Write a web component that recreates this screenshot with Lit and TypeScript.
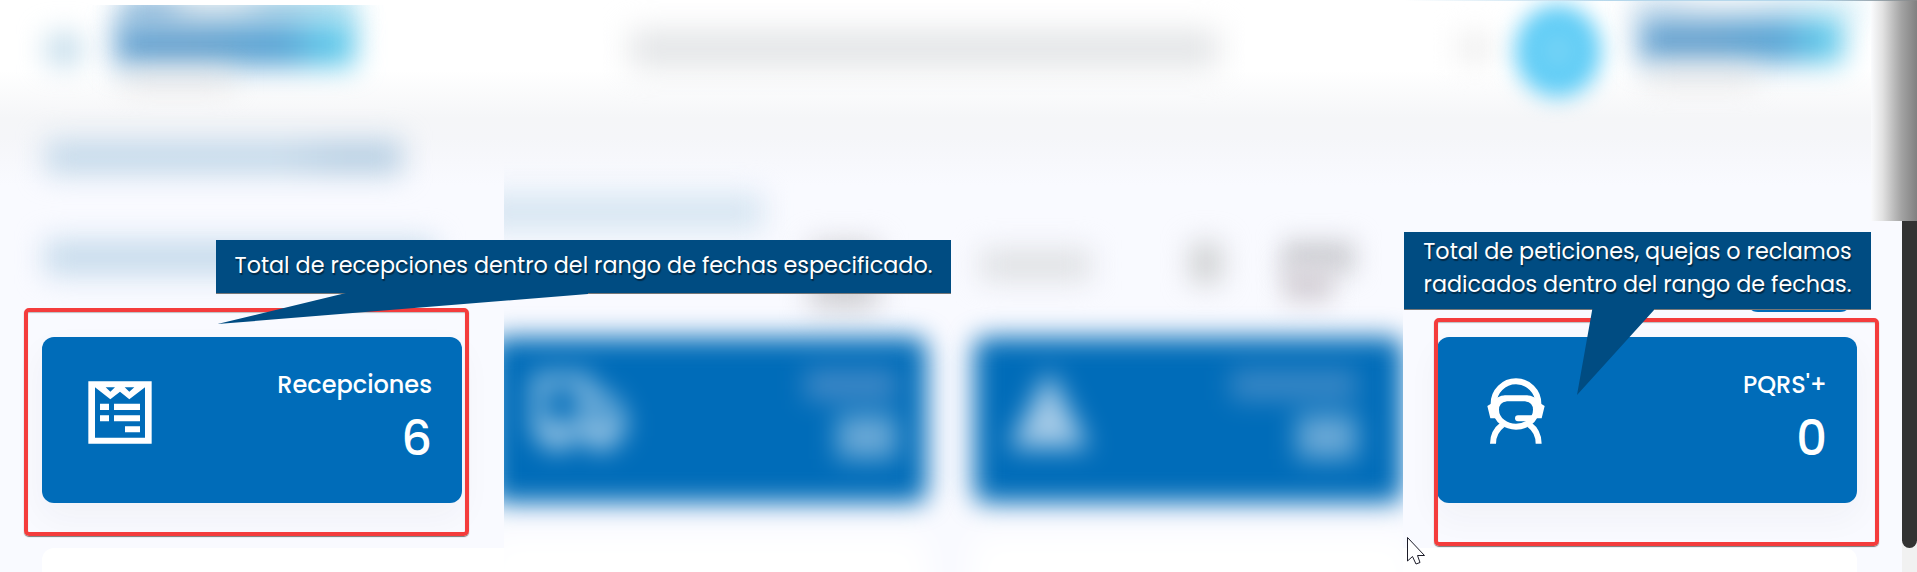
import { LitElement, html, css, svg } from "lit";
import { customElement, property } from "lit/decorators.js";

const receipt = svg`<svg width="64" height="63" viewBox="54 62 192 189" fill="#fff">
  <path fill-rule="evenodd" d="M55 63H245V250H55ZM75 81V232H225V81L178 117L150 94L121 117ZM107 81L121 94L135 81ZM164 81L178 94L193 81Z"/>
  <path d="M90 130h27v19h-27zM132 130h78v19h-78zM90 165h27v18h-27zM132 165h78v18h-78zM165 198h45v18h-45z"/>
</svg>`;

const support = svg`<svg width="58" height="66" viewBox="79 53 174 198" fill="none" stroke="#fff" stroke-width="18">
  <path d="M99 140V130A67 67 0 0 1 233 130V140"/>
  <path d="M100 136Q112 114 136 114H196Q220 114 232 136"/>
  <path d="M136 114Q106 120 106 148C106 180 137 199 166 199C195 199 226 180 226 148Q226 120 196 114"/>
  <path d="M172 174H216" stroke-linecap="round"/>
  <path d="M97 250C97 228 107 207 126 193M234 250C234 228 225 207 206 193"/>
  <path d="M80 137L91 130H106V174H89ZM252 137L241 130H226V174H243Z" fill="#fff" stroke="none"/>
</svg>`;

const truck = svg`<svg width="92" height="84" viewBox="0 0 92 84" fill="none" stroke="#a9cfea" stroke-width="11">
  <path d="M6 62V10H52V62ZM52 28H72L86 46V62H52"/><circle cx="24" cy="66" r="9"/><circle cx="68" cy="66" r="9"/>
</svg>`;

const alertIcon = svg`<svg width="84" height="80" viewBox="0 0 84 80"><path d="M42 0L82 78H2Z" fill="#a4cae7"/></svg>`;

@customElement("stat-card")
export class StatCard extends LitElement {
  @property() label = "";
  @property() value = "";
  static styles = css`
    :host { display: flex; flex: none; box-sizing: border-box; width: 420px; height: 166px; border-radius: 12px;
      background: #006cb9; color: #fff; justify-content: space-between; padding: 29px 30px 0 46px;
      box-shadow: 0 14px 34px rgba(40, 40, 60, .045); font-family: Poppins, Inter, sans-serif; font-weight: 500; font-feature-settings: "cv11"; }
    .icon { padding-top: var(--icon-top, 15px); padding-left: var(--icon-left, 0px); }
    .data { display: flex; flex-direction: column; align-items: flex-end; }
    .label { font-size: 24px; line-height: 38px; }
    .value { font-size: 48px; line-height: 69px; }
  `;
  render() {
    return html`<div class="icon"><slot></slot></div>
      <div class="data"><div class="label">${this.label}</div><div class="value">${this.value}</div></div>`;
  }
}

@customElement("app-root")
export class AppRoot extends LitElement {
  static styles = css`
    :host { display: block; position: relative; width: 1917px; height: 572px; overflow: hidden;
      font-family: Poppins, Inter, sans-serif; font-feature-settings: "cv11"; }
    .page { display: flex; height: 572px; background: #f9faff; }
    .pane { display: flex; flex-direction: column; overflow: hidden; height: 572px; flex: none;
      background: linear-gradient(#fff 0, #fff 70px, #f5f6f8 118px, #f5f6f9 138px, #f9faff 185px); }
    .left { width: 504px; }
    .middle { width: 899px; }
    .right { width: 514px; }
    .header { height: 105px; flex: none; display: flex; }
    .heading { height: 75px; flex: none; display: flex; }
    .filters { height: 157px; flex: none; display: flex; }
    .cards { height: 211px; flex: none; display: flex; gap: 45px; }
    .soft { filter: blur(14px); flex: none; }
    .menu { margin: 34px 0 0 47px; width: 34px; height: 31px; background: #c0dbea; }
    .mark { display: flex; flex-direction: column; margin: 5px 0 0 34px; width: 250px; height: 90px; clip-path: inset(0 -40px -40px -40px); }
    .right .mark { margin: 1px 0 0 24px; width: 236px; }
    .tint { margin-left: 6px; height: 28px; width: 234px; background: linear-gradient(90deg, #8fbadb 18%, #d4e3ec 30%, #d4e3ec 48%, #9ecbe3 65%, #a4def0); margin-top: -8px; }
    .logo { width: 240px; height: 46px; margin-top: -4px;
      background: linear-gradient(90deg, #6aa5d2, #6aa4cf 35%, #57a4d5 70%, #60c8ea 88%); }
    .right .tint { opacity: .3; }
    .right .logo { margin: -4px 0 0 14px; width: 204px; height: 46px; }
    .tag { width: 110px; height: 14px; margin: 6px 0 0 8px; background: #e3e1e1; }
    .right .tag { margin-left: 22px; }
    .title { margin: 35px 0 0 46px; width: 356px; height: 34px; background: linear-gradient(90deg, #c4d9ea 65%, #b7cfe3 82%); }
    .subtitle { margin: 60px 0 0 45px; width: 390px; height: 35px; background: #c6dbec; }
    .search { margin: 30px 0 0 126px; width: 588px; height: 38px; background: #e3e5e7; filter: blur(15px); }
    .crumb { margin: 88px 0 0 -24px; width: 283px; height: 38px; background: #d7e6f2; }
    .m1 { margin: 62px 0 0 306px; width: 68px; height: 68px; background: #d0d0d4; }
    .m2 { margin: 69px 0 0 102px; width: 111px; height: 32px; background: #dfe1e4; }
    .m3 { margin: 63px 0 0 100px; width: 30px; height: 40px; background: #cbcdce; }
    .m4 { margin: 60px 0 0 61px; width: 73px; height: 34px; background: #cfd0d5; filter: blur(12px); }
    .m5 { margin: 86px 0 0 -72px; width: 50px; height: 36px; background: #d6d2d8; filter: blur(12px); }
    .bell { margin: 34px 0 0 55px; width: 34px; height: 28px; background: #eee; }
    .avatar { margin: 5px 0 0 23px; width: 86px; height: 92px; border-radius: 50%; background: radial-gradient(#7dd6f6, #58caf6 55%, #70d2f7); filter: blur(11px); }
    .left .cards { padding-left: 42px; }
    .right .cards { padding-left: 34px; }
    .left stat-card { --icon-top: 14.5px; }
    .right stat-card { --icon-top: 12px; --icon-left: 3.5px; }
    .ghost { display: flex; flex: none; justify-content: space-between; box-sizing: border-box; width: 436px; height: 166px; margin-left: -13px;
      border-radius: 12px; background: #006cb9; filter: blur(13px); padding: 33px 30px 0 42px; }
    .ghost + .ghost { margin-left: 2px; width: 429px; padding: 33px 46px 0 33px; }
    .bars { display: flex; flex-direction: column; align-items: flex-end; gap: 15px; }
    .bar-label { width: 92px; height: 30px; background: #4089c7; }
    .ghost + .ghost .bar-label { width: 126px; height: 30px; background: #3a88c6; }
    .bar-value { width: 60px; height: 44px; background: #69a8d6; }
    .sheets { display: flex; gap: 45px; flex: none; height: 60px; }
    .sheet { background: #fff; height: 60px; flex: none; }
    .left .sheet { margin-left: 42px; width: 480px; border-radius: 12px 0 0; }
    .middle .sheets { margin: -12px 0 0 -17px; }
    .middle .sheet { width: 440px; height: 100px; filter: blur(16px); }
    .right .sheet { width: 454px; border-radius: 0 12px 0 0; }
    .frame { position: absolute; box-sizing: border-box; border: 4.5px solid #f43c3c; border-radius: 5px; box-shadow: 0 1px 1px #777, inset 0 1px 1px #8888; }
    .f1 { left: 24px; top: 308px; width: 445px; height: 228px; }
    .f2 { left: 1434px; top: 318px; width: 445px; height: 228px; }
    .callout { position: absolute; box-sizing: border-box; background: #004c82; color: #fff; font-size: 22.3px; line-height: 33px;
      white-space: nowrap; text-align: center; text-shadow: 1px 2px 1px rgba(0, 0, 0, .45); box-shadow: 0 1px 0 #777; }
    .c1 { left: 216px; top: 240px; width: 735px; height: 53px; padding-top: 9px; }
    .c2 { left: 1404px; top: 232px; width: 467px; height: 77px; padding-top: 3px; }
    .overlay { position: absolute; left: 0; top: 0; }
    .action { position: absolute; left: 1746px; top: 272px; width: 106px; height: 40px; border-radius: 12px; background: #006cb9; }
    .rail { position: absolute; right: 0; top: 0; width: 15px; height: 572px; background: #f1f1f1; }
    .thumb { height: 548px; background: #333; border-radius: 0 0 8px 8px; }
    .haze { position: absolute; right: 0; top: 1px; width: 46px; height: 220px;
      background: linear-gradient(90deg, #fafbfd, #e2e2e2 25%, #b8b8b8 52%, #a2a2a2 67%, #808080); }
    .line { position: absolute; right: 0; top: 0; width: 513px; height: 1px; background: linear-gradient(90deg, #fff, #b5d7eb 40%, #b5d7eb 80%, #888); }
  `;
  render() {
    const mark = html`<div class="mark"><div class="soft tint"></div><div class="soft logo"></div><div class="soft tag"></div></div>`;
    const bars = html`<div class="bars"><div class="bar-label"></div><div class="bar-value"></div></div>`;
    return html`
      <div class="page">
        <div class="pane left">
          <div class="header"><div class="soft menu"></div>${mark}</div>
          <div class="heading"><div class="soft title"></div></div>
          <div class="filters"><div class="soft subtitle"></div></div>
          <div class="cards"><stat-card label="Recepciones" value="6">${receipt}</stat-card></div>
          <div class="sheet"></div>
        </div>
        <div class="pane middle">
          <div class="header"><div class="soft search"></div></div>
          <div class="heading"><div class="soft crumb"></div></div>
          <div class="filters"><div class="soft m1"></div><div class="soft m2"></div>
            <div class="soft m3"></div><div class="soft m4"></div><div class="soft m5"></div></div>
          <div class="cards"><div class="ghost">${truck}${bars}</div><div class="ghost">${alertIcon}${bars}</div></div>
          <div class="sheets"><div class="sheet"></div><div class="sheet"></div></div>
        </div>
        <div class="pane right">
          <div class="header"><div class="soft bell"></div><div class="soft avatar"></div>${mark}</div>
          <div class="heading"></div>
          <div class="filters"></div>
          <div class="cards"><stat-card label="PQRS'+" value="0">${support}</stat-card></div>
          <div class="sheet"></div>
        </div>
      </div>
      <div class="action"></div>
      <div class="rail"><div class="thumb"></div></div>
      <div class="haze"></div><div class="line"></div>
      <div class="frame f1"></div><div class="frame f2"></div>
      <div class="callout c1">Total de recepciones dentro del rango de fechas especificado.</div>
      <div class="callout c2">Total de peticiones, quejas o reclamos<br>radicados dentro del rango de fechas.</div>
      <svg class="overlay" width="1917" height="572">
        <path d="M350 292L217.5 324L588 294V292ZM1592.5 308L1577 395L1654 310V308Z" fill="#004c82"/>
        <path d="M1407.5 537.5V561L1412.5 556.5L1416 564L1420 562.5L1417.5 555.5H1424.5Z" fill="#fff" stroke="#1b1b28" stroke-width="1"/>
      </svg>`;
  }
}
